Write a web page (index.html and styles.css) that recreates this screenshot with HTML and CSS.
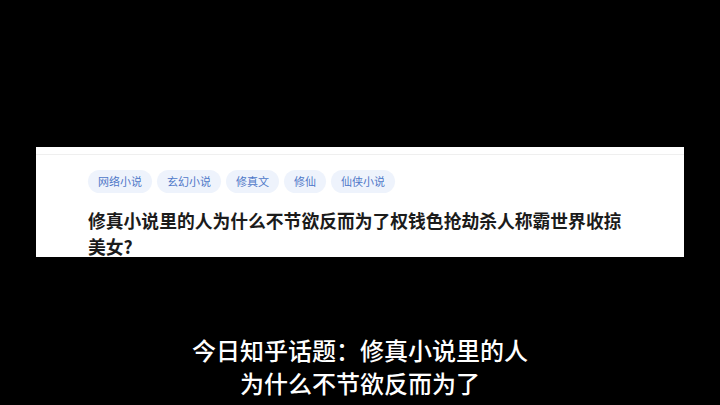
FILE: index.html
```html
<!DOCTYPE html>
<html lang="zh">
<head>
<meta charset="utf-8">
<link rel="stylesheet" href="styles.css">
</head>
<body>
<div class="screen">
  <div class="card">
    <div class="topline"></div>
    <div class="content">
      <div class="tags">
        <span class="tag">网络小说</span>
        <span class="tag">玄幻小说</span>
        <span class="tag">修真文</span>
        <span class="tag">修仙</span>
        <span class="tag">仙侠小说</span>
      </div>
      <div class="title">修真小说里的人为什么不节欲反而为了权钱色抢劫杀人称霸世界收掠美女?</div>
    </div>
  </div>
  <div class="subs">
    <div class="sub">今日知乎话题：修真小说里的人</div>
    <div class="sub">为什么不节欲反而为了</div>
  </div>
</div>
</body>
</html>
```
FILE: styles.css
```css
html, body {
  margin: 0;
  padding: 0;
  background: #000;
}
.screen {
  width: 720px;
  height: 405px;
  overflow: hidden;
  background: #000;
  padding-top: 147px;
  box-sizing: border-box;
  font-family: "Noto Sans CJK SC", "Noto Sans", sans-serif;
}
.card {
  margin: 0 36px;
  height: 110px;
  background: #fff;
  box-sizing: border-box;
  padding-top: 7px;
}
.topline {
  height: 1px;
  background: #efefef;
}
.content {
  padding: 15px 0 0 52px;
}
.tags {
  display: flex;
  gap: 5px;
}
.tag {
  height: 23px;
  line-height: 23px;
  padding: 0 10px;
  border-radius: 12px;
  background: #eef3fc;
  color: #4e78c8;
  font-size: 11px;
}
.title {
  margin-top: 14px;
  width: 545px;
  font-size: 17.8px;
  font-weight: 700;
  line-height: 26px;
  color: #1b1b1b;
}
.subs {
  margin-top: 76px;
  text-align: center;
  color: #fff;
  font-size: 24px;
  line-height: 33px;
  font-weight: 500;
}
```
